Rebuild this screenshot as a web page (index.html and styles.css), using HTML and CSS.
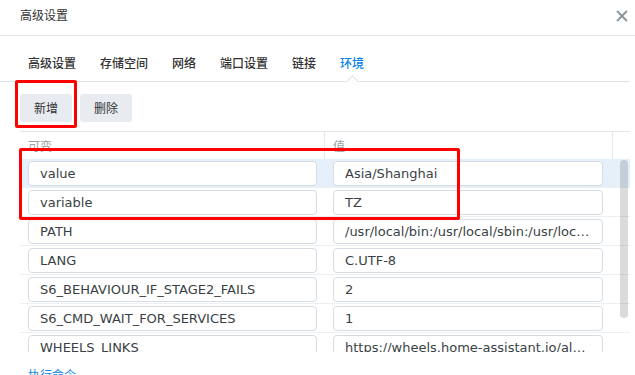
FILE: index.html
```html
<!DOCTYPE html>
<html lang="zh-CN">
<head>
<meta charset="utf-8">
<link rel="stylesheet" href="styles.css">
</head>
<body>
<div class="dialog">
  <div class="header">
    <span class="title">高级设置</span>
    <span class="close" aria-label="关闭"></span>
  </div>
  <div class="tabs">
    <span class="tab">高级设置</span>
    <span class="tab">存储空间</span>
    <span class="tab">网络</span>
    <span class="tab">端口设置</span>
    <span class="tab">链接</span>
    <span class="tab active">环境</span>
  </div>
  <div class="toolbar">
    <button class="btn">新增</button>
    <button class="btn">删除</button>
  </div>
  <div class="table">
    <div class="thead">
      <div class="th">可变</div>
      <div class="th">值</div>
      <div class="th"></div>
    </div>
    <div class="tbody">
      <div class="row selected"><div class="cell c1"><div class="input">value</div></div><div class="cell c2"><div class="input">Asia/Shanghai</div></div></div>
      <div class="row"><div class="cell c1"><div class="input">variable</div></div><div class="cell c2"><div class="input">TZ</div></div></div>
      <div class="row"><div class="cell c1"><div class="input">PATH</div></div><div class="cell c2"><div class="input">/usr/local/bin:/usr/local/sbin:/usr/local/bin:/usr/sbin:/usr/bin</div></div></div>
      <div class="row"><div class="cell c1"><div class="input">LANG</div></div><div class="cell c2"><div class="input">C.UTF-8</div></div></div>
      <div class="row"><div class="cell c1"><div class="input">S6_BEHAVIOUR_IF_STAGE2_FAILS</div></div><div class="cell c2"><div class="input">2</div></div></div>
      <div class="row"><div class="cell c1"><div class="input">S6_CMD_WAIT_FOR_SERVICES</div></div><div class="cell c2"><div class="input">1</div></div></div>
      <div class="row"><div class="cell c1"><div class="input">WHEELS_LINKS</div></div><div class="cell c2"><div class="input">https://wheels.home-assistant.io/alpine-3.16/amd64/</div></div></div>
      <div class="scrollbar"></div>
    </div>
  </div>
  <div class="footer-link">执行命令</div>
  <div class="mark mark-btn"></div>
  <div class="mark mark-rows"></div>
</div>
</body>
</html>
```

FILE: styles.css
```css
* { box-sizing: border-box; }
html, body {
  margin: 0;
  padding: 0;
  background: #fff;
  overflow: hidden;
}
body {
  font-family: "Noto Sans CJK SC", "Noto Sans", sans-serif;
  font-size: 12px;
  color: #333;
}
.dialog {
  position: relative;
  width: 635px;
  height: 375px;
  overflow: hidden;
}
.header {
  height: 36px;
  border-bottom: 1px solid #e2e6ea;
  padding-left: 20px;
  display: flex;
  align-items: center;
  position: relative;
}
.title {
  font-size: 12px;
  line-height: 16px;
  margin-top: -6px;
  color: #333;
}
.close {
  position: absolute;
  left: 616px;
  top: 10px;
  width: 12px;
  height: 12px;
}
.close::before, .close::after {
  content: "";
  position: absolute;
  left: -1px;
  top: 5px;
  width: 14px;
  height: 2px;
  background: #8f969e;
  transform: rotate(45deg);
}
.close::after { transform: rotate(-45deg); }

.tabs {
  height: 46px;
  margin-right: 5px;
  border-bottom: 1px solid #dde2e7;
  display: flex;
  gap: 24px;
  padding: 19px 0 0 28px;
}
.tab {
  position: relative;
  line-height: 16px;
  font-size: 12px;
  font-weight: 500;
  color: #333;
}
.tab.active { color: #0a84e8; }
.tab.active::after {
  content: "";
  position: absolute;
  left: 8px;
  top: 22px;
  width: 8px;
  height: 8px;
  background: #fff;
  border-left: 1px solid #dde2e7;
  border-top: 1px solid #dde2e7;
  transform: rotate(45deg);
}

.toolbar {
  display: flex;
  gap: 8px;
  padding: 12px 0 0 20px;
}
.btn {
  height: 28px;
  padding: 0 14px;
  border: none;
  border-radius: 3px;
  background: #e8ecf1;
  color: #333;
  font-family: "Noto Sans CJK SC", sans-serif;
  font-size: 12px;
  line-height: 28px;
}

.table {
  margin: 9px 5px 0 20px;
  border-top: 1px solid #e2e6ea;
}
.thead {
  display: grid;
  grid-template-columns: 305px 288px 17px;
  height: 27px;
}
.th {
  color: #9a9fa5;
  font-size: 12px;
  line-height: 27px;
  padding-left: 8px;
  border-right: 1px solid #e5e8eb;
}
.th:last-child { border-right: none; }
.tbody {
  position: relative;
  height: 193px;
  overflow: hidden;
}
.row {
  display: grid;
  grid-template-columns: 305px 288px;
  height: 29px;
  border-bottom: 1px solid #edf0f3;
}
.row.selected { background: #e6f0fa; }
.cell { padding-top: 2px; }
.c1 { padding-left: 8px; }
.c2 { padding-left: 8px; }
.input {
  height: 25px;
  border: 1px solid #d6dde5;
  border-radius: 4px;
  background: #fff;
  padding: 0 10px 0 11px;
  font-family: "DejaVu Sans", Verdana, sans-serif;
  font-size: 13px;
  line-height: 23px;
  color: #3a3f45;
  white-space: nowrap;
  overflow: hidden;
  text-overflow: ellipsis;
}
.c1 .input { width: 289px; }
.c2 .input { width: 270px; }
.scrollbar {
  position: absolute;
  left: 600px;
  top: 1px;
  width: 8px;
  height: 158px;
  border-radius: 4px;
  background: rgba(0, 0, 0, 0.14);
}

.footer-link {
  padding: 15px 0 0 28px;
  color: #0a84e8;
  font-size: 12px;
  line-height: 16px;
}

.mark {
  position: absolute;
  border: 3px solid #ff0000;
  border-radius: 2px;
}
.mark-btn {
  left: 15px;
  top: 80px;
  width: 62px;
  height: 48px;
}
.mark-rows {
  left: 19px;
  top: 148px;
  width: 441px;
  height: 72px;
}
```
